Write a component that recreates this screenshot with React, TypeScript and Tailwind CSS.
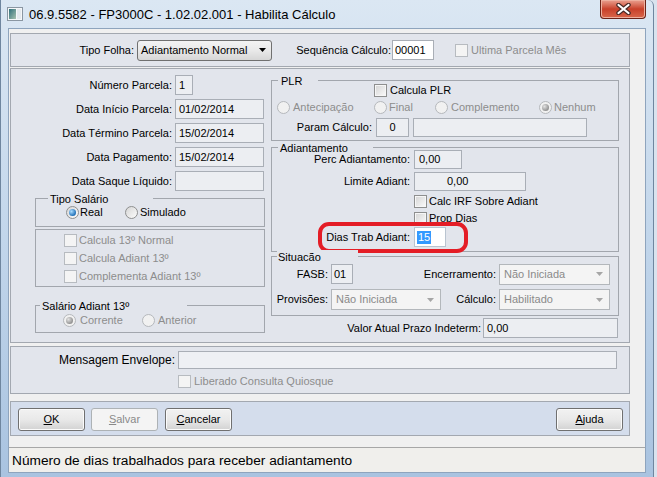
import React from 'react'

type Cls = { className?: string; children?: React.ReactNode }

function Check({ disabled = false }: { disabled?: boolean }) {
    return (
        <span
            className={
                disabled
                    ? 'block h-[13px] w-[13px] shrink-0 border border-[#b7bbc0] bg-[#f4f4f4]'
                    : 'block h-[13px] w-[13px] shrink-0 border border-[#8e8f8f] bg-linear-to-br from-[#d4d4d4] to-[#fbfbfb] shadow-[inset_0_0_0_1px_#f6f6f6]'
            }
        />
    )
}

function Radio({ checked = false, disabled = false }: { checked?: boolean; disabled?: boolean }) {
    return (
        <span
            className={
                disabled
                    ? 'flex h-[13px] w-[13px] shrink-0 items-center justify-center rounded-full border border-[#b5b8bc] bg-[#f1f1f1]'
                    : 'flex h-[13px] w-[13px] shrink-0 items-center justify-center rounded-full border border-[#8e8f8f] bg-linear-to-br from-[#d6d6d6] to-[#fcfcfc]'
            }
        >
            {checked && (
                <span
                    className={
                        disabled
                            ? 'block h-[7px] w-[7px] rounded-full bg-[radial-gradient(circle_at_35%_35%,#e2e2e2,#8d8d8d_75%)]'
                            : 'block h-[7px] w-[7px] rounded-full bg-[radial-gradient(circle_at_35%_35%,#a9dcff,#1769b4_75%)]'
                    }
                />
            )}
        </span>
    )
}

function Field({ className = '', children }: Cls) {
    return <div className={`flex items-center border border-[#a9aeb6] bg-[#eceef2] ${className}`}>{children}</div>
}

function Arrow({ color }: { color: string }) {
    return (
        <svg width="7" height="4" viewBox="0 0 7 4" className="shrink-0">
            <path d="M0 0h7L3.5 4z" fill={color} />
        </svg>
    )
}

function Combo({ className = '', text }: { className?: string; text: string }) {
    return (
        <div className={`flex h-[21px] items-center border border-[#b3b7bb] bg-[#f4f4f4] pl-[4px] pr-[6px] text-[#8a8a8a] ${className}`}>
            <span className="flex-1">{text}</span>
            <Arrow color="#a6a6a6" />
        </div>
    )
}

function Group({ className = '', legend, legendClass = '', children }: Cls & { legend: string; legendClass?: string }) {
    return (
        <div className={`relative border border-[#a2a6ad] ${className}`}>
            <span className={`absolute top-[-7px] flex h-[14px] items-center bg-[#e2e5ec] ${legendClass}`}>{legend}</span>
            {children}
        </div>
    )
}

function Button({ label, hot, disabled = false, className = '' }: { label: string; hot: string; disabled?: boolean; className?: string }) {
    return (
        <div
            className={
                disabled
                    ? `flex h-[23px] w-[67px] items-center justify-center rounded-[3px] border border-[#adb2b5] bg-[#f4f4f4] text-[#8a8a8a] ${className}`
                    : `flex h-[23px] w-[67px] items-center justify-center rounded-[3px] border border-[#707070] bg-linear-to-b from-[#f2f2f2] via-[#e9e9e9] to-[#d2d2d2] shadow-[inset_0_0_0_1px_#fbfbfb] ${className}`
            }
        >
            <span className="underline">{hot}</span>
            {label}
        </div>
    )
}

const leftRows = [
    { label: 'Número Parcela:', value: '1', w: 'w-[18px]' },
    { label: 'Data Início Parcela:', value: '01/02/2014', w: 'w-[89px]' },
    { label: 'Data Término Parcela:', value: '15/02/2014', w: 'w-[89px]' },
    { label: 'Data Pagamento:', value: '15/02/2014', w: 'w-[89px]' },
    { label: 'Data Saque Líquido:', value: '', w: 'w-[89px]' },
]

export default function App() {
    return (
        <div className="h-[477px] w-[657px] overflow-hidden bg-[#d9e3ee] font-['Liberation_Sans',Arial,sans-serif] text-[11px] leading-[13px] text-black">
            <div className="flex h-[477px] w-[654px] flex-col rounded-tr-[6px] border-x border-[#6f869f] bg-linear-to-b from-[#dbe7f3] via-[#c2d6eb] to-[#a9c3e0]">
                {/* title bar */}
                <div className="flex h-[28px] shrink-0 items-center pl-[6px]">
                    <svg width="16" height="14" viewBox="0 0 16 14" className="shrink-0">
                        <defs>
                            <linearGradient id="ic" x1="0" y1="0" x2="1" y2="1">
                                <stop offset="0" stopColor="#2f6f7a" />
                                <stop offset="1" stopColor="#a8c2b0" />
                            </linearGradient>
                        </defs>
                        <rect x="0.5" y="0.5" width="15" height="13" fill="#f5f7f9" stroke="#8a96a2" />
                        <rect x="2" y="2" width="7" height="10" fill="url(#ic)" />
                        <rect x="10" y="2" width="4" height="10" fill="#e4e9ee" />
                    </svg>
                    <span className="ml-[6px] text-[13px] leading-none">06.9.5582 - FP3000C - 1.02.02.001 - Habilita Cálculo</span>
                    <div className="ml-auto mr-[7px] flex h-[19px] w-[46px] items-center justify-center self-start rounded-b-[4px] border border-t-0 border-[#6b2318] bg-linear-to-b from-[#e9a090] via-[#c8402a] to-[#d8664a] shadow-[inset_0_0_0_1px_#eeb09f]">
                        <svg width="15" height="12" viewBox="0 0 15 12">
                            <path d="M2.5 2l10 8M12.5 2l-10 8" stroke="#4a2a26" strokeWidth="4.5" strokeLinecap="round" />
                            <path d="M2.5 2l10 8M12.5 2l-10 8" stroke="#ffffff" strokeWidth="2.2" strokeLinecap="round" />
                        </svg>
                    </div>
                </div>

                {/* client area */}
                <div className="ml-[7px] mr-[7px] flex h-[445px] flex-col border border-[#8ea4bd] bg-[#f0f0f0] pt-[4px]">
                    {/* top panel */}
                    <div className="ml-[1px] flex h-[34px] w-[620px] items-center border border-[#a3a8b0] bg-[#e2e5ec]">
                        <span className="w-[123px] text-right">Tipo Folha:</span>
                        <div className="ml-[3px] flex h-[21px] w-[135px] items-center rounded-[3px] border border-[#707070] bg-linear-to-b from-[#f3f3f3] via-[#e9e9e9] to-[#d6d6d6] pl-[3px] pr-[5px]">
                            <span className="flex-1">Adiantamento Normal</span>
                            <Arrow color="#000000" />
                        </div>
                        <span className="w-[119px] text-right">Sequência Cálculo:</span>
                        <Field className="ml-[1px] h-[20px] w-[42px] bg-white px-[2px]">00001</Field>
                        <span className="ml-[21px]"><Check disabled /></span>
                        <span className="ml-[3px] text-[#8d8d8d]">Ultima Parcela Mês</span>
                    </div>

                    {/* main panel */}
                    <div className="ml-[1px] mt-[1px] flex h-[275px] w-[620px] border border-[#a3a8b0] bg-[#e2e5ec]">
                        {/* left column */}
                        <div className="flex w-[260px] shrink-0 flex-col pt-[6px]">
                            <div className="flex flex-col gap-[4px]">
                                {leftRows.map((r) => (
                                    <div key={r.label} className="flex h-[20px] items-center">
                                        <span className="w-[161px] text-right">{r.label}</span>
                                        <Field className={`ml-[3px] h-[20px] px-[3px] ${r.w}`}>{r.value}</Field>
                                    </div>
                                ))}
                            </div>

                            <Group className="ml-[24px] mt-[7px] h-[29px] w-[230px]" legend="Tipo Salário" legendClass="left-[12px] w-[105px] pl-[2px]">
                                <div className="flex h-[13px] items-center pl-[30px] mt-[7px]">
                                    <div className="flex w-[59px] items-center">
                                        <Radio checked />
                                        <span className="ml-[1px]">Real</span>
                                    </div>
                                    <Radio />
                                    <span className="ml-[2px]">Simulado</span>
                                </div>
                            </Group>

                            <div className="ml-[24px] mt-[2px] flex h-[58px] w-[230px] flex-col gap-[5px] border border-[#a2a6ad] pl-[28px] pt-[4px] text-[#8d8d8d]">
                                {['Calcula 13º Normal', 'Calcula Adiant 13º', 'Complementa Adiant 13º'].map((t) => (
                                    <div key={t} className="flex h-[13px] items-center">
                                        <Check disabled />
                                        <span className="ml-[2px]">{t}</span>
                                    </div>
                                ))}
                            </div>

                            <Group className="ml-[24px] mt-[18px] h-[28px] w-[230px]" legend="Salário Adiant 13º" legendClass="left-[4px] w-[147px] pl-[2px]">
                                <div className="mt-[8px] flex h-[13px] items-center pl-[27px] text-[#8d8d8d]">
                                    <div className="flex w-[79px] items-center">
                                        <Radio checked disabled />
                                        <span className="ml-[4px]">Corrente</span>
                                    </div>
                                    <Radio disabled />
                                    <span className="ml-[3px]">Anterior</span>
                                </div>
                            </Group>
                        </div>

                        {/* right column */}
                        <div className="flex w-[348px] shrink-0 flex-col pt-[11px]">
                            <Group className="h-[61px] w-[348px]" legend="PLR" legendClass="left-[6px] w-[40px] pl-[3px]">
                                <div className="mt-[3px] flex h-[13px] items-center pl-[102px]">
                                    <Check />
                                    <span className="ml-[3px]">Calcula PLR</span>
                                </div>
                                <div className="mt-[4px] flex h-[13px] items-center pl-[5px] text-[#8d8d8d]">
                                    <div className="flex w-[97px] items-center">
                                        <Radio disabled />
                                        <span className="ml-[3px]">Antecipação</span>
                                    </div>
                                    <div className="flex w-[61px] items-center">
                                        <Radio disabled />
                                        <span className="ml-[2px]">Final</span>
                                    </div>
                                    <div className="flex w-[104px] items-center">
                                        <Radio disabled />
                                        <span className="ml-[3px]">Complemento</span>
                                    </div>
                                    <Radio checked disabled />
                                    <span className="ml-[2px]">Nenhum</span>
                                </div>
                                <div className="mt-[4px] flex h-[19px] items-center">
                                    <span className="w-[100px] text-right">Param Cálculo:</span>
                                    <Field className="ml-[4px] h-[19px] w-[33px] justify-center">0</Field>
                                    <Field className="ml-[4px] h-[19px] w-[174px]" />
                                </div>
                            </Group>

                            <Group className="mt-[6px] h-[105px] w-[348px] pt-[2px]" legend="Adiantamento" legendClass="left-[6px] w-[95px] pl-[2px]">
                                <div className="flex h-[19px] items-center">
                                    <span className="w-[138px] text-right">Perc Adiantamento:</span>
                                    <Field className="ml-[4px] h-[19px] w-[48px] px-[4px]">0,00</Field>
                                </div>
                                <div className="mt-[3px] flex h-[19px] items-center">
                                    <span className="w-[138px] text-right">Limite Adiant:</span>
                                    <Field className="ml-[4px] h-[19px] w-[112px] pl-[32px]">0,00</Field>
                                </div>
                                <div className="mt-[4px] flex h-[13px] items-center pl-[142px]">
                                    <Check />
                                    <span className="ml-[2px]">Calc IRF Sobre Adiant</span>
                                </div>
                                <div className="mt-[4px] flex h-[13px] items-center pl-[142px]">
                                    <Check />
                                    <span className="ml-[2px]">Prop Dias</span>
                                </div>
                                <div className="relative mt-[2px] flex h-[20px] items-center">
                                    <span className="w-[138px] text-right">Dias Trab Adiant:</span>
                                    <div className="ml-[4px] flex h-[20px] w-[32px] items-center border border-[#b9c4d0] bg-white pl-[2px]">
                                        <span className="bg-[#3399ff] px-[1px] text-white">15</span>
                                    </div>
                                    <div className="absolute left-[46px] top-[-5px] h-[31px] w-[150px] rounded-[11px] border-[4px] border-[#e41d26]" />
                                </div>
                            </Group>

                            <Group className="mt-[4px] h-[60px] w-[348px] pt-[7px]" legend="Situacão" legendClass="left-[5px] w-[81px] pl-[1px]">
                                <div className="flex h-[20px] items-center">
                                    <span className="w-[56px] text-right">FASB:</span>
                                    <Field className="ml-[3px] h-[20px] w-[22px] px-[2px]">01</Field>
                                    <span className="w-[143px] text-right">Encerramento:</span>
                                    <Combo className="ml-[3px] w-[111px]" text="Não Iniciada" />
                                </div>
                                <div className="mt-[5px] flex h-[21px] items-center">
                                    <span className="w-[56px] text-right">Provisões:</span>
                                    <Combo className="ml-[3px] w-[110px]" text="Não Iniciada" />
                                    <span className="w-[55px] text-right">Cálculo:</span>
                                    <Combo className="ml-[3px] w-[111px]" text="Habilitado" />
                                </div>
                            </Group>

                            <div className="mt-[2px] flex h-[20px] items-center">
                                <span className="w-[210px] text-right">Valor Atual Prazo Indeterm:</span>
                                <Field className="ml-[2px] h-[20px] w-[135px] px-[3px]">0,00</Field>
                            </div>
                        </div>
                    </div>

                    {/* message panel */}
                    <div className="ml-[1px] mt-[3px] flex h-[48px] w-[620px] flex-col border border-[#a3a8b0] bg-[#e2e5ec] pt-[4px]">
                        <div className="flex h-[18px] items-center">
                            <span className="w-[164px] text-right text-[12px]">Mensagem Envelope:</span>
                            <Field className="ml-[3px] h-[18px] w-[439px] bg-[#eef0f4]" />
                        </div>
                        <div className="mt-[6px] flex h-[13px] items-center pl-[167px] text-[#8d8d8d]">
                            <Check disabled />
                            <span className="ml-[3px]">Liberado Consulta Quiosque</span>
                        </div>
                    </div>

                    {/* buttons */}
                    <div className="ml-[1px] mt-[7px] flex h-[35px] w-[620px] border border-[#a3a8b0] bg-[#d4ddec] pl-[7px] pr-[6px] pt-[6px]">
                        <Button hot="O" label="K" />
                        <Button hot="S" label="alvar" disabled className="ml-[6px]" />
                        <Button hot="C" label="ancelar" className="ml-[7px]" />
                        <Button hot="A" label="juda" className="ml-auto" />
                    </div>

                    {/* status bar */}
                    <div className="mt-[11px] flex h-[25px] items-center border-t border-[#a7a7a7] bg-[#f0efec] pl-[3px] text-[13.7px]">
                        Número de dias trabalhados para receber adiantamento
                    </div>
                </div>
            </div>
        </div>
    )
}
